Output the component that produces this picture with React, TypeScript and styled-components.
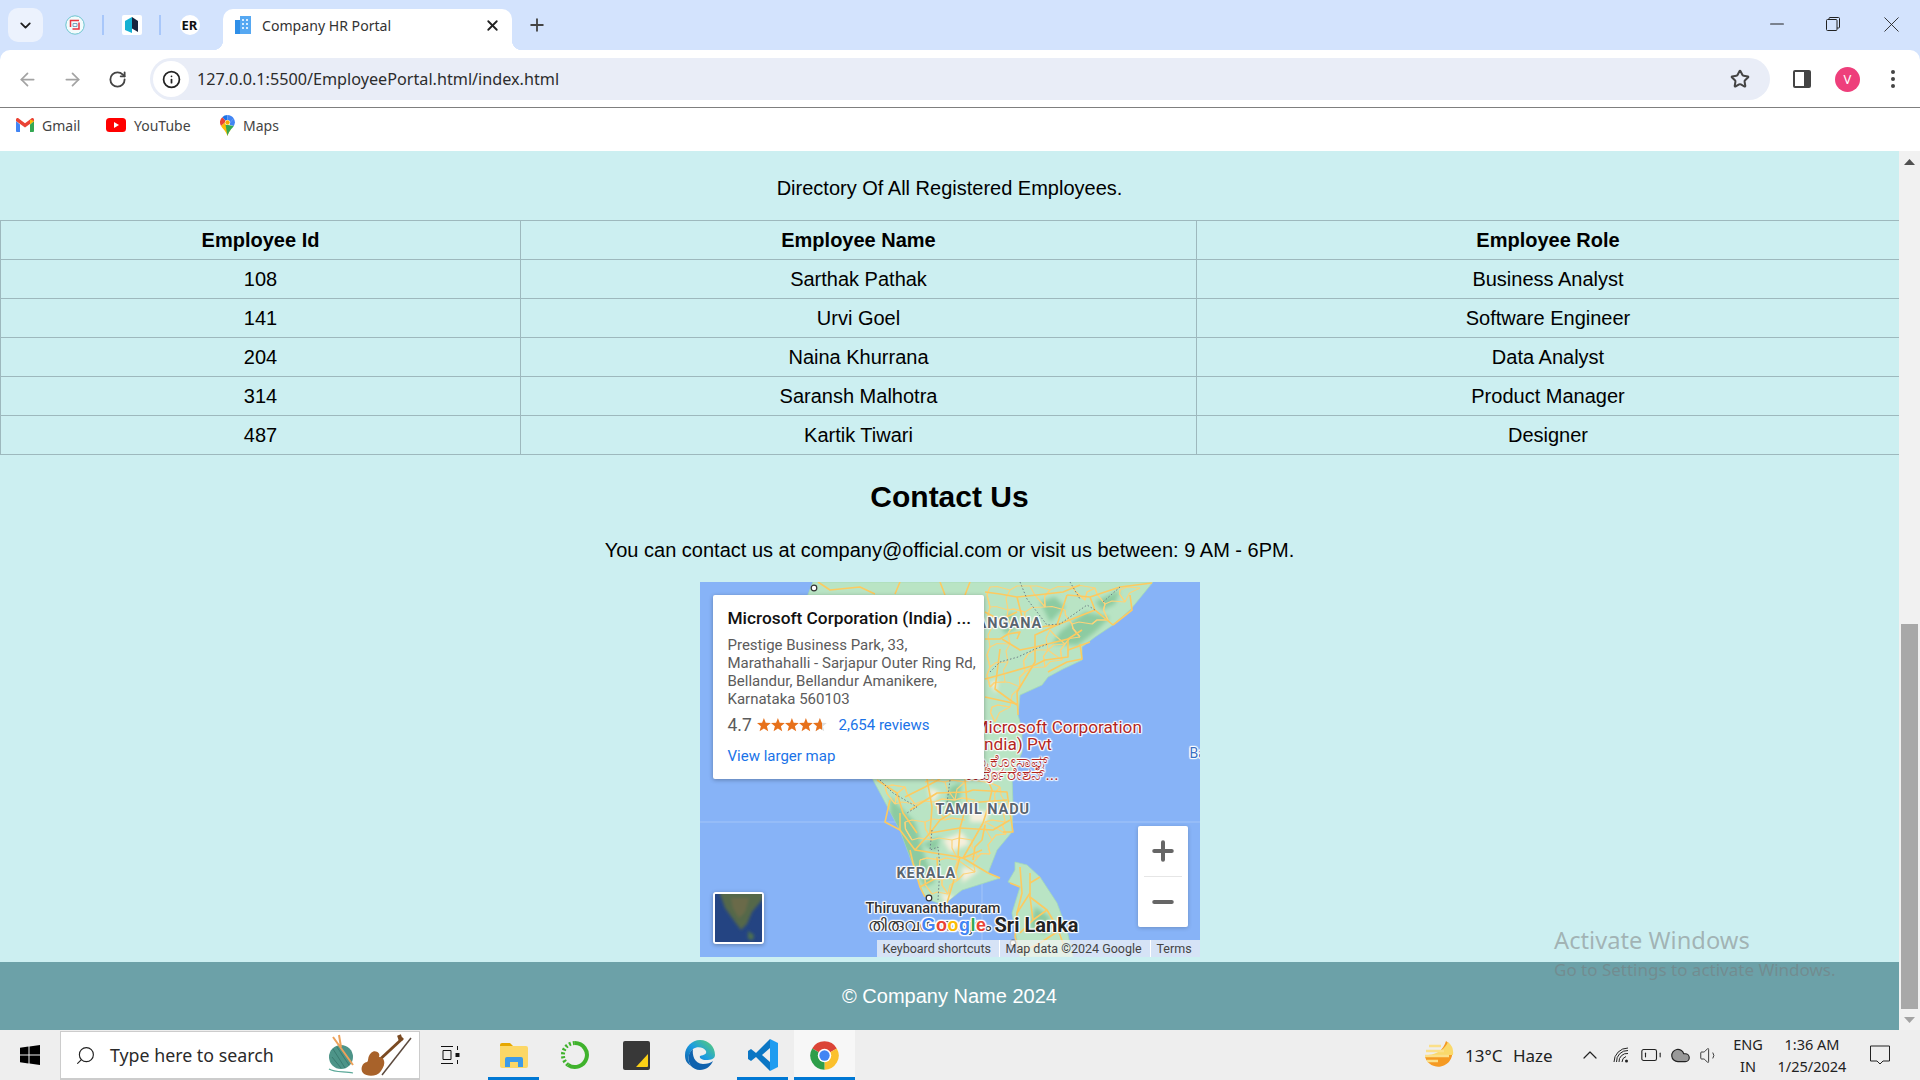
import React from "react";
import styled, { createGlobalStyle } from "styled-components";
import { ArrowLeft, ArrowRight, RotateCw, Info, Star, X, Plus, Minus, ChevronDown, ChevronUp, Search, BatteryLow, Volume1, Cloud } from "lucide-react";

const Global = createGlobalStyle`
  html, body { margin: 0; padding: 0; width: 1920px; height: 1080px; overflow: hidden; background: #fff; }
  * { box-sizing: border-box; }
`;

const UI = `"Noto Sans", "Open Sans", sans-serif`;
const halo = (c = "#fff") => `text-shadow: -1px 0 1px ${c}, 1px 0 1px ${c}, 0 -1px 1px ${c}, 0 1px 1px ${c}, -1px -1px 1px ${c}, 1px 1px 1px ${c}, 1px -1px 1px ${c}, -1px 1px 1px ${c};`;

const Screen = styled.div`
  width: 1920px; height: 1080px; display: flex; flex-direction: column; overflow: hidden; position: relative;
  font-family: "Liberation Sans", Arial, sans-serif;
`;

/* ---- browser chrome ---- */
const TabStrip = styled.div`
  height: 50px; flex: none; background: #d3e3fd; display: flex; align-items: center; padding-left: 8px; color: #1f1f1f;
`;
const TabListButton = styled.div`
  width: 35px; height: 34px; border-radius: 10px; background: #ecf2fd; display: flex; align-items: center; justify-content: center; margin-right: 4px;
`;
const PinnedTab = styled.div`
  width: 57px; height: 20px; display: flex; align-items: center; justify-content: center;
  ${(p: { $sep?: boolean }) => p.$sep ? "border-right: 2px solid #a8c7fa;" : ""}
`;
const ErBadge = styled.div`
  width: 20px; height: 20px; border-radius: 50%; background: #fff; color: #111; font: 700 13px ${UI}; display: flex; align-items: center; justify-content: center;
`;
const ActiveTab = styled.div`
  align-self: flex-end; margin-left: 5px; width: 289px; height: 41px; background: #fff; border-radius: 10px 10px 0 0; display: flex; align-items: center; padding: 0 11px 9px 12px; position: relative;
  &::before, &::after { content: ""; position: absolute; bottom: 0; width: 10px; height: 10px; }
  &::before { left: -10px; background: radial-gradient(circle at 0 0, #d3e3fd 10px, #fff 10.5px); }
  &::after { right: -10px; background: radial-gradient(circle at 100% 0, #d3e3fd 10px, #fff 10.5px); }
`;
const TabTitle = styled.span`
  font: 400 14.1px ${UI}; color: #333; margin-left: 11px; flex: 1; white-space: nowrap;
`;
const NewTab = styled.div`
  width: 30px; height: 30px; margin-left: 10px; display: flex; align-items: center; justify-content: center; color: #444;
`;
const WindowControls = styled.div`
  margin-left: auto; display: flex; align-items: center; height: 100%; padding-bottom: 2px;
`;
const WindowButton = styled.div<{ $w: number }>`
  width: ${p => p.$w}px; display: flex; align-items: center; justify-content: center; color: #222;
`;
const Toolbar = styled.div`
  height: 58px; flex: none; background: #fff; border-radius: 10px 10px 0 0; border-bottom: 1px solid #7f7f7f; display: flex; align-items: center; padding: 1px 0 0 0;
`;
const ToolbarBack = styled.div` background: #d3e3fd; height: 58px; flex: none; `;
const NavButton = styled.div`
  width: 45px; display: flex; align-items: center; justify-content: center; color: ${(p: { $dim?: boolean }) => p.$dim ? "#a3a3a3" : "#444"};
`;
const NavGroup = styled.div` display: flex; padding-left: 5px; margin-right: 10px; `;
const Omnibox = styled.div`
  width: 1620px; height: 42px; border-radius: 21px; background: #e9edf7; display: flex; align-items: center; padding: 0 20px 0 3px; flex: none;
`;
const SiteInfo = styled.div`
  width: 36px; height: 36px; border-radius: 50%; background: #fff; display: flex; align-items: center; justify-content: center; color: #222; flex: none;
`;
const UrlText = styled.span`
  font: 400 16.2px ${UI}; color: #2c2c2c; margin-left: 8px; flex: 1; white-space: nowrap;
`;
const ToolbarIcons = styled.div` display: flex; align-items: center; flex: none; padding-left: 23px; `;
const Avatar = styled.div`
  width: 25px; height: 25px; border-radius: 50%; background: #ee3f7b; color: #fff; font: 400 13px ${UI}; display: flex; align-items: center; justify-content: center; margin: 0 30px 0 24px;
`;
const Bookmarks = styled.div`
  height: 43px; flex: none; background: #fff; display: flex; align-items: center; padding: 0 0 9px 16px;
`;
const Bookmark = styled.div`
  display: flex; align-items: center; gap: 8px; font: 400 14px ${UI}; color: #444; width: ${(p: { $w: number }) => p.$w}px;
`;

/* ---- page ---- */
const Viewport = styled.div` flex: 1; display: flex; min-height: 0; `;
const Page = styled.main`
  width: 1899px; height: 879px; flex: none; background: #cceff1; padding-top: 26px; display: flex; flex-direction: column; color: #000;
`;
const Intro = styled.p` margin: 0 0 19px; height: 24px; text-align: center; font-size: 20px; line-height: 23px; `;
const Table = styled.table`
  width: 1899px; border-collapse: collapse; table-layout: fixed; font-size: 20px; flex: none;
  th, td { border: 1px solid #9db8bd; height: 39px; padding: 0; text-align: center; line-height: 23px; }
`;
const Heading = styled.h2` margin: 23px 0 0; height: 37px; line-height: 37px; text-align: center; font-size: 30px; font-weight: 700; `;
const ContactText = styled.p` margin: 24px 0 0; height: 23px; line-height: 23px; text-align: center; font-size: 20px; `;
const MapFrame = styled.div`
  width: 500px; height: 375px; margin: 20px auto 0; flex: none; position: relative; overflow: hidden; background: #87b3f7; font-family: Roboto, sans-serif;
`;
const MapArt = styled.svg` position: absolute; left: 0; top: 0; `;
const MapLabel = styled.span<{ $x: number; $y: number; $size: number; $color: string; $weight?: number; $ls?: number }>`
  position: absolute; left: ${p => p.$x}px; top: ${p => p.$y}px; line-height: 1; white-space: nowrap; transform: translateY(-50%);
  font-size: ${p => p.$size}px; color: ${p => p.$color}; font-weight: ${p => p.$weight ?? 400}; letter-spacing: ${p => p.$ls ?? 0}px;
  ${halo("rgba(255,255,255,.85)")}
`;
const GoogleMark = styled.span`
  position: absolute; left: 222px; top: 343px; transform: translateY(-50%); font: 700 18px "Liberation Sans", sans-serif; line-height: 1; letter-spacing: .5px; ${halo()}
`;
const Letter = styled.span<{ $c: string }>` color: ${p => p.$c}; `;
const InfoCard = styled.div`
  position: absolute; left: 13px; top: 13px; width: 271px; height: 184px; background: #fff; border-radius: 2px; box-shadow: 0 1px 4px rgba(0,0,0,.3); padding: 13px 0 0 15px;
`;
const CardTitle = styled.div` font-size: 17.3px; font-weight: 500; color: #111; line-height: 21px; white-space: nowrap; `;
const CardAddress = styled.div` margin-top: 7px; font-size: 15px; line-height: 18px; color: #5b5b5b; white-space: nowrap; `;
const RatingRow = styled.div` display: flex; align-items: center; margin-top: 6px; height: 22px; `;
const RatingValue = styled.span` font-size: 17.5px; color: #5b5b5b; width: 29px; `;
const CardLink = styled.span` font-size: 15px; color: #1a73e8; white-space: nowrap; `;
const Reviews = styled(CardLink)` margin-left: 12px; `;
const LargerMap = styled.div` margin-top: 11px; line-height: 18px; font-size: 15px; color: #1a73e8; `;
const ZoomControl = styled.div`
  position: absolute; left: 438px; top: 244px; width: 50px; height: 101px; background: #fff; border-radius: 2px; box-shadow: 0 1px 4px rgba(0,0,0,.2); display: flex; flex-direction: column; color: #666;
`;
const ZoomButton = styled.div` flex: 1; display: flex; align-items: center; justify-content: center; `;
const ZoomRule = styled.div` height: 1px; margin: 0 6px; background: #e6e6e6; flex: none; `;
const SatThumb = styled.div`
  position: absolute; left: 13px; top: 310px; width: 51px; height: 52px; border: 2px solid #fff; border-radius: 3px; overflow: hidden; box-shadow: 0 1px 4px rgba(0,0,0,.3); background: #244482;
`;
const Attribution = styled.div`
  position: absolute; left: 177px; right: 0; bottom: 0; height: 17px; background: rgba(245,245,245,.72); display: flex; align-items: center; font-size: 12.5px; color: #444; white-space: nowrap;
`;
const AttrItem = styled.span<{ $w: number; $sep?: boolean }>`
  width: ${p => p.$w}px; padding-left: 6px; height: 100%; line-height: 17px; ${p => p.$sep ? "border-right: 1px solid #fff;" : ""}
`;
const Footer = styled.footer`
  margin-top: 5px; height: 68px; flex: none; background: #6ca1a8; color: #fff; font-size: 20px; display: flex; align-items: center; justify-content: center;
`;
const ScrollTrack = styled.div`
  width: 21px; flex: none; background: #f1f1f1; display: flex; flex-direction: column; align-items: center; justify-content: space-between;
`;
const ScrollEnd = styled.div` height: 21px; display: flex; align-items: center; justify-content: center; `;
const ScrollThumb = styled.div` width: 17px; height: 385px; background: #a8a8a8; margin-top: 452px; flex: none; `;
const Watermark = styled.div`
  position: absolute; left: 1554px; top: 925px; color: rgba(120,120,120,.5); font-family: "Noto Sans", sans-serif; pointer-events: none; white-space: nowrap;
`;
const WatermarkTitle = styled.div` font-size: 23.7px; line-height: 31px; `;
const WatermarkSub = styled.div` font-size: 17px; line-height: 24px; margin-top: 2px; `;

/* ---- taskbar ---- */
const Taskbar = styled.div`
  height: 50px; flex: none; background: #eee; display: flex; align-items: stretch; font-family: ${UI}; color: #222;
`;
const StartButton = styled.div` width: 60px; display: flex; align-items: center; justify-content: center; `;
const SearchBox = styled.div`
  width: 360px; background: #fff; border: 1px solid #ccc; border-bottom-width: 2px; margin-top: 1px; display: flex; align-items: center; padding: 0 6px 0 14px; color: #222;
`;
const SearchText = styled.span` font-size: 17.8px; margin-left: 14px; flex: 1; color: #2a2a2a; white-space: nowrap; `;
const TaskIcon = styled.div<{ $w: number; $on?: boolean; $active?: boolean }>`
  width: ${p => p.$w}px; display: flex; align-items: center; justify-content: center; flex: none;
  ${p => p.$on ? "border-bottom: 3px solid #0078d4; padding-top: 3px;" : ""}
  ${p => p.$active ? "background: #f7f7f7;" : ""}
`;
const Tray = styled.div` margin-left: auto; display: flex; align-items: center; `;
const Weather = styled.div` display: flex; align-items: center; font-size: 17px; width: 150px; white-space: nowrap; `;
const WeatherText = styled.span` margin-left: 11px; word-spacing: 6px; `;
const TrayIcon = styled.div<{ $w: number }>` width: ${p => p.$w}px; display: flex; align-items: center; justify-content: center; color: #222; `;
const Stacked = styled.div<{ $w: number }>`
  width: ${p => p.$w}px; text-align: center; font-size: 14.5px; line-height: 22px; white-space: nowrap;
`;
const Notify = styled.div` width: 68px; display: flex; align-items: center; justify-content: center; padding-right: 12px; `;

/* ---- map art ---- */
const roads = [
  "M285 10 300 12 317 15 337 13 363 10 380 3", "M390 15 420 5 452 1", "M367 13 357 43 335 53 335 80 317 110 318 133",
  "M413 43 395 28 357 43", "M430 13 432 28 413 43", "M382 48 368 57 368 75 345 78 335 83", "M390 60 368 68",
  "M380 62 382 77 367 80 348 90", "M335 83 300 93 285 97", "M302 57 320 68 335 65 368 57", "M300 67 295 107 317 123",
  "M285 115 317 122", "M317 57 320 50 308 52 300 57 285 57", "M317 15 322 35 340 45 357 43", "M285 30 300 38 317 30", "M395 28 390 15 367 13",
  "M118 0 130 8 160 5 175 12", "M200 0 195 12", "M240 0 245 13", "M270 0 265 13",
  "M177 198 197 211 203 231 217 251", "M227 197 232 225 230 251 260 246 293 248 310 238", "M265 197 267 221 260 246 258 275 263 276 282 268",
  "M283 241 263 276 288 291", "M260 275 215 268 200 248 200 231", "M260 275 253 301 247 321", "M237 275 238 295 220 305 225 315",
  "M273 208 307 210 310 231 313 250 303 250", "M230 251 240 238 267 221 307 218", "M273 278 275 265 282 258 285 243", "M210 228 237 211 267 210 273 208",
  "M210 268 213 281 220 305", "M287 196 292 208 288 225 283 241", "M205 215 225 205 240 197", "M215 268 230 251", "M200 248 185 240 190 218",
  "M288 291 300 296", "M310 301 320 305", "M320 285 322 311 317 331 315 355 320 371", "M330 291 330 315 347 328 357 345 363 361",
  "M330 301 340 295", "M330 311 317 331", "M330 315 333 338 320 351", "M347 328 333 338", "M360 348 340 361 320 371",
];
const nodes: [number, number][] = [
  [290,5],[310,8],[330,4],[350,8],[372,5],[395,6],[420,8],[440,6],[290,25],[308,28],[325,30],[345,25],[365,28],[385,18],[405,22],[425,20],
  [292,45],[312,45],[330,42],[350,48],[372,42],[392,42],[408,38],[290,65],[310,62],[328,72],[348,68],[365,62],[380,55],[290,85],[308,80],[325,90],[345,85],[362,78],
  [290,105],[305,100],[320,105],[292,125],[310,125],[295,140],
  [185,205],[205,205],[225,200],[245,200],[265,200],[285,200],[300,205],[195,222],[215,222],[235,220],[255,218],[275,218],[295,222],[308,225],
  [205,240],[225,240],[245,238],[265,238],[285,240],[305,240],[212,258],[232,258],[252,258],[272,258],[292,258],[306,252],
  [220,278],[240,278],[258,278],[278,275],[290,272],[225,298],[242,298],[258,298],[275,290],[232,312],[248,312],
];
const meshRoads = nodes.flatMap(([x, y], i) =>
  nodes
    .map(([a, b], j) => ({ a, b, j, d: (a - x) ** 2 + (b - y) ** 2 }))
    .filter(n => n.j !== i && n.d < 700)
    .sort((m, n) => m.d - n.d)
    .slice(0, (i % 3) + 1)
    .map(n => `M${x} ${y} ${(x + n.a) / 2 + ((i * 7) % 7) - 3} ${(y + n.b) / 2 + ((i * 5) % 5) - 2} ${n.a} ${n.b}`)
);
const stateLines = [
  "M320 0 327 17 347 43 360 42 387 23 395 28", "M420 5 403 20", "M290 90 300 80 318 75 335 67 348 62", "M370 0 380 17",
  "M180 198 193 211 217 225 207 231", "M232 248 230 268 238 265 240 285 238 318", "M250 198 247 221",
];
const star = "M6.900 0 8.700 4.700 13.800 5.100 9.900 8.300 11.200 13.200 6.900 10.500 2.600 13.200 3.900 8.300 0 5.100 5.100 4.700Z";

function MapArtwork() {
  return (
    <MapArt width="500" height="375" viewBox="0 0 500 375">
      <defs>
        <filter id="soft" x="-20%" y="-20%" width="140%" height="140%"><feGaussianBlur stdDeviation="2" /></filter>
        <clipPath id="landClip"><path d="M113 0 453 0 431 27 413 43 395 55 382 65 382 78 363 87 348 95 342 103 320 113 318 133 322 147 322 170 312 195 313 223 312 250 297 268 288 291 300 296 262 308 243 323 230 318 223 311 210 275 200 248 172 196 130 100 105 20Z M308 300 315 288 315 280 327 283 340 295 357 321 367 348 373 375 320 375 312 331 320 305Z" /></clipPath>
      </defs>
      <rect width="500" height="375" fill="#87b3f7" />
      <path d="M0 240H500M282 240V375" stroke="#a3c5f8" strokeWidth="1" fill="none" />
      <path fill="#b9e4c4" stroke="#a6dab7" strokeWidth=".8" d="M113 0 453 0 431 27 413 43 395 55 382 65 382 78 363 87 348 95 342 103 320 113 318 133 322 147 322 170 312 195 313 223 312 250 297 268 288 291 300 296 262 308 243 323 230 318 223 311 210 275 200 248 172 196 130 100 105 20Z" />
      <path fill="#b9e4c4" stroke="#a6dab7" strokeWidth=".8" d="M308 300 315 288 315 280 327 283 340 295 357 321 367 348 373 375 320 375 312 331 320 305Z" />
      <g clipPath="url(#landClip)">
        <g filter="url(#soft)">
          <path fill="#8ccba1" d="M340 20 355 15 365 25 350 40ZM360 50 385 30 410 35 395 50 378 63 352 62ZM395 20 420 8 415 22 402 28ZM190 215 215 240 225 275 235 300 225 305 205 270 190 235ZM335 325 350 335 345 352 330 345ZM300 40 312 30 318 45 305 52ZM250 205 262 200 258 225 245 225ZM222 262 240 255 236 270Z" />
          <path fill="#f6efdc" d="M262 285 280 288 262 301ZM243 258 262 250 270 262 250 270ZM270 228 290 230 285 240 270 240ZM228 205 240 210 232 222ZM290 100 298 98 296 112ZM240 310 255 315 245 322Z" />
        </g>
      </g>
      <g fill="none" stroke="#fcd37a" strokeWidth="1.200" strokeLinejoin="round">
        {meshRoads.map((d, i) => <path key={i} d={d} />)}
      </g>
      <g fill="none" stroke="#fdca60" strokeWidth="1.600" strokeLinejoin="round">
        {roads.map((d, i) => <path key={i} d={d} />)}
      </g>
      <g fill="none" stroke="#6f7f86" strokeWidth="1" strokeDasharray="1.500 2">
        {stateLines.map((d, i) => <path key={i} d={d} />)}
      </g>
      <circle cx="114" cy="6" r="2.800" fill="#fff" stroke="#333" strokeWidth="1.200" />
      <circle cx="229" cy="316" r="2.800" fill="#fff" stroke="#333" strokeWidth="1.200" />
      <circle cx="313" cy="361" r="2.800" fill="#fff" stroke="#555" strokeWidth="1.200" />
    </MapArt>
  );
}

const rows: [number, string, string][] = [
  [108, "Sarthak Pathak", "Business Analyst"],
  [141, "Urvi Goel", "Software Engineer"],
  [204, "Naina Khurrana", "Data Analyst"],
  [314, "Saransh Malhotra", "Product Manager"],
  [487, "Kartik Tiwari", "Designer"],
];

const Dots = () => (
  <svg width="6" height="20" viewBox="0 0 6 20"><g fill="#444"><circle cx="3" cy="3" r="2" /><circle cx="3" cy="10" r="2" /><circle cx="3" cy="17" r="2" /></g></svg>
);

const sector = (a: number, b: number) => {
  const p = (d: number) => [12 + 11 * Math.cos(d * Math.PI / 180), 12 + 11 * Math.sin(d * Math.PI / 180)].map(n => n.toFixed(2)).join(" ");
  return `M12 12L${p(a)}A11 11 0 0 1 ${p(b)}Z`;
};

export default function App() {
  return (
    <Screen>
      <Global />
      <TabStrip>
        <TabListButton><ChevronDown size={17} strokeWidth={2.6} color="#1f1f1f" /></TabListButton>
        <PinnedTab $sep>
          <svg width="20" height="20" viewBox="0 0 20 20"><circle cx="10" cy="10" r="9.200" fill="#f2fbfc" stroke="#6cc4ce" strokeWidth="1" /><path d="M5.500 12V5.500H14M14 7.500V14H7.500" fill="none" stroke="#e8343f" strokeWidth="1.500" /><path d="M8 8.500h4v3H8z" fill="none" stroke="#5b8fb0" strokeWidth=".8" /></svg>
        </PinnedTab>
        <PinnedTab $sep>
          <svg width="20" height="20" viewBox="0 0 20 20"><rect width="20" height="20" rx="2" fill="#fff" /><path d="M3 6 10 2V18L3 15Z" fill="#15b1d3" /><path d="M10 2 16 6V17L10 13.500Z" fill="#16233d" /></svg>
        </PinnedTab>
        <PinnedTab><ErBadge>ER</ErBadge></PinnedTab>
        <ActiveTab>
          <svg width="16" height="18" viewBox="0 0 16 18"><rect x="0" y="4" width="5" height="14" fill="#2f8fe8" /><rect x="5" y="0" width="11" height="18" fill="#56a8f2" /><g fill="#d7ecff"><rect x="7" y="3" width="2" height="2" /><rect x="11" y="3" width="2" height="2" /><rect x="7" y="7" width="2" height="2" /><rect x="11" y="7" width="2" height="2" /><rect x="7" y="11" width="2" height="2" /><rect x="11" y="11" width="2" height="2" /></g></svg>
          <TabTitle>Company HR Portal</TabTitle>
          <X size={17} strokeWidth={2.6} color="#222" />
        </ActiveTab>
        <NewTab><Plus size={20} strokeWidth={2.2} /></NewTab>
        <WindowControls>
          <WindowButton $w={55}><Minus size={22} strokeWidth={1.1} /></WindowButton>
          <WindowButton $w={58}>
            <svg width="14" height="14" viewBox="0 0 14 14" fill="none" stroke="#222"><rect x=".5" y="2.500" width="10.500" height="11" rx="1" /><path d="M3 2.500V1.500A1 1 0 0 1 4 .5H12.500A1 1 0 0 1 13.500 1.500V10A1 1 0 0 1 12.500 11H11" /></svg>
          </WindowButton>
          <WindowButton $w={58}><X size={27} strokeWidth={.8} /></WindowButton>
        </WindowControls>
      </TabStrip>
      <ToolbarBack>
        <Toolbar>
          <NavGroup>
            <NavButton $dim><ArrowLeft size={21} strokeWidth={2} /></NavButton>
            <NavButton $dim><ArrowRight size={21} strokeWidth={2} /></NavButton>
            <NavButton><RotateCw size={19} strokeWidth={2.3} /></NavButton>
          </NavGroup>
          <Omnibox>
            <SiteInfo><Info size={19} strokeWidth={2.2} /></SiteInfo>
            <UrlText>127.0.0.1:5500/EmployeePortal.html/index.html</UrlText>
            <Star size={20} strokeWidth={2.4} color="#444" />
          </Omnibox>
          <ToolbarIcons>
            <svg width="18" height="18" viewBox="0 0 18 18"><rect width="18" height="18" rx="2" fill="#444" /><rect x="2" y="2" width="9" height="14" fill="#fff" /></svg>
            <Avatar>V</Avatar>
            <Dots />
          </ToolbarIcons>
        </Toolbar>
      </ToolbarBack>
      <Bookmarks>
        <Bookmark $w={90}>
          <svg width="18" height="14" viewBox="0 0 18 14"><path d="M0 3V12.500A1.200 1.200 0 0 0 1.200 14H4V6.500Z" fill="#4285f4" /><path d="M14 6.500V14H16.800A1.200 1.200 0 0 0 18 12.500V3Z" fill="#34a853" /><path d="M0 3 9 9.500 18 3 V1.600C18 .3 16.600-.4 15.600.3L14 1.500 9 5.200 4 1.500 2.400.3C1.400-.4 0 .3 0 1.600Z" fill="#ea4335" /><path d="M14 1.500 18 3 14 6.500Z" fill="#fbbc04" /></svg>
          Gmail
        </Bookmark>
        <Bookmark $w={114}>
          <svg width="20" height="14" viewBox="0 0 20 14"><rect width="20" height="14" rx="3.500" fill="#f00" /><path d="M8 4v6l5-3z" fill="#fff" /></svg>
          YouTube
        </Bookmark>
        <Bookmark $w={90}>
          <svg width="15" height="21" viewBox="0 0 15 21"><path d="M7.500 0A7.400 7.400 0 0 0 2.200 2.200L5.600 5.700 7.500 5 Z" fill="#1a73e8" /><path d="M7.500 0C10 0 12.500 1.400 13.800 3.600L10 7.500 7.500 5Z" fill="#4285f4" /><path d="M2.200 2.200A7.300 7.300 0 0 0 1.100 11L5.500 7 5.600 5.700Z" fill="#ea4335" /><path d="M13.800 3.600C15.300 6.300 15.200 8.500 13.800 11L9.500 9.800 10 7.500Z" fill="#4285f4" /><path d="M1.100 11C2.500 13.500 6 16 7.500 21 8.200 18.500 9 17 10.500 15L5.500 7Z" fill="#fbbc04" /><path d="M5.500 9.500 13.800 11C12.500 13 11.500 13.700 10.500 15 9.500 16.300 8.300 18 7.500 21Z" fill="#34a853" /><circle cx="7.500" cy="7.500" r="2.600" fill="#fff" /><circle cx="7.500" cy="7.500" r="2.200" fill="#f9ab00" /></svg>
          Maps
        </Bookmark>
      </Bookmarks>

      <Viewport>
        <Page>
          <Intro>Directory Of All Registered Employees.</Intro>
          <Table>
            <colgroup><col width="520" /><col width="676" /><col width="703" /></colgroup>
            <thead><tr><th>Employee Id</th><th>Employee Name</th><th>Employee Role</th></tr></thead>
            <tbody>
              {rows.map(([id, name, role]) => <tr key={id}><td>{id}</td><td>{name}</td><td>{role}</td></tr>)}
            </tbody>
          </Table>
          <Heading>Contact Us</Heading>
          <ContactText>You can contact us at company@official.com or visit us between: 9 AM - 6PM.</ContactText>
          <MapFrame>
            <MapArtwork />
            <MapLabel $x={249} $y={42} $size={14.5} $color="#5a6570" $weight={700} $ls={1}>TELANGANA</MapLabel>
            <MapLabel $x={236} $y={228} $size={14.5} $color="#5a6570" $weight={700} $ls={.9}>TAMIL NADU</MapLabel>
            <MapLabel $x={197} $y={292} $size={14.5} $color="#5a6570" $weight={700} $ls={.9}>KERALA</MapLabel>
            <MapLabel $x={274} $y={146} $size={17.2} $color="#b3261e">Microsoft Corporation</MapLabel>
            <MapLabel $x={274} $y={163} $size={17.2} $color="#b3261e">(India) Pvt</MapLabel>
            <MapLabel $x={270} $y={180} $size={16.5} $color="#b3261e">ಮೈಕ್ರೋಸಾಫ್ಟ್</MapLabel>
            <MapLabel $x={265} $y={193} $size={16.5} $color="#b3261e">ಕಾರ್ಪೊರೇಶನ್...</MapLabel>
            <MapLabel $x={166} $y={327} $size={14.5} $color="#333" $weight={500}>Thiruvananthapuram</MapLabel>
            <MapLabel $x={168} $y={343} $size={17} $color="#333" $weight={500}>തിരുവനന്തപുരം</MapLabel>
            <MapLabel $x={295} $y={343} $size={20} $color="#222" $weight={700}>Sri Lanka</MapLabel>
            <MapLabel $x={490} $y={171} $size={14} $color="#3a6fc4">Bay</MapLabel>
            <GoogleMark>
              <Letter $c="#4285f4">G</Letter><Letter $c="#ea4335">o</Letter><Letter $c="#fbbc05">o</Letter><Letter $c="#4285f4">g</Letter><Letter $c="#34a853">l</Letter><Letter $c="#ea4335">e</Letter>
            </GoogleMark>
            <InfoCard>
              <CardTitle>Microsoft Corporation (India) ...</CardTitle>
              <CardAddress>Prestige Business Park, 33,<br />Marathahalli - Sarjapur Outer Ring Rd,<br />Bellandur, Bellandur Amanikere,<br />Karnataka 560103</CardAddress>
              <RatingRow>
                <RatingValue>4.7</RatingValue>
                <svg width="70" height="14" viewBox="0 0 70 14">
                  <defs><clipPath id="partial"><rect x="56" y="0" width="9" height="14" /></clipPath></defs>
                  {[0, 1, 2, 3].map(i => <path key={i} d={star} fill="#e7711b" transform={`translate(${i * 14} 0)`} />)}
                  <path d={star} fill="#ddd" transform="translate(56 0)" />
                  <g clipPath="url(#partial)"><path d={star} fill="#e7711b" transform="translate(56 0)" /></g>
                </svg>
                <Reviews>2,654 reviews</Reviews>
              </RatingRow>
              <LargerMap>View larger map</LargerMap>
            </InfoCard>
            <ZoomControl>
              <ZoomButton><Plus size={30} strokeWidth={3.2} /></ZoomButton>
              <ZoomRule />
              <ZoomButton><Minus size={30} strokeWidth={3.2} /></ZoomButton>
            </ZoomControl>
            <SatThumb>
              <svg width="47" height="48" viewBox="0 0 47 48">
                <defs><filter id="satBlur"><feGaussianBlur stdDeviation="1.500" /></filter></defs>
                <rect width="47" height="48" fill="#244482" />
                <g filter="url(#satBlur)">
                  <path d="M4 -3 50 -3 47 6 37 18 32 30 26 36 20 28 10 14Z" fill="#55684a" />
                  <path d="M16 4 34 4 30 18 24 24 18 14Z" fill="#6b6b4a" />
                  <path d="M33 37 39 41 38 46 33 45Z" fill="#4d7050" />
                </g>
              </svg>
            </SatThumb>
            <Attribution>
              <AttrItem $w={123} $sep>Keyboard shortcuts</AttrItem>
              <AttrItem $w={151} $sep>Map data ©2024 Google</AttrItem>
              <AttrItem $w={49}>Terms</AttrItem>
            </Attribution>
          </MapFrame>
          <Footer>© Company Name 2024</Footer>
        </Page>
        <ScrollTrack>
          <ScrollEnd><svg width="11" height="6" viewBox="0 0 11 6"><path d="M5.500 0 11 6H0Z" fill="#505050" /></svg></ScrollEnd>
          <ScrollThumb />
          <ScrollEnd><svg width="11" height="6" viewBox="0 0 11 6"><path d="M5.500 6 11 0H0Z" fill="#a3a3a3" /></svg></ScrollEnd>
        </ScrollTrack>
      </Viewport>

      <Taskbar>
        <StartButton>
          <svg width="20" height="20" viewBox="0 0 20 20" fill="#000"><path d="M0 2.800 8.500 1.600V9.500H0ZM9.500 1.500 20 0V9.500H9.500ZM0 10.500H8.500V18.400L0 17.200ZM9.500 10.500H20V20L9.500 18.500Z" /></svg>
        </StartButton>
        <SearchBox>
          <Search size={21} strokeWidth={1.3} style={{ transform: "scaleX(-1)" }} />
          <SearchText>Type here to search</SearchText>
          <svg width="86" height="44" viewBox="0 0 86 44">
            <path d="M2 36C8 40 18 38 26 40" stroke="#5aa898" fill="none" strokeWidth="1.200" />
            <circle cx="14" cy="24" r="12" fill="#4d9488" />
            <path d="M6 16 18 35M10 14 22 32M5 24 14 35" stroke="#3a7a70" strokeWidth="1" fill="none" />
            <path d="M6 4 26 32M12 2 14 14" stroke="#eda15a" strokeWidth="2" fill="none" />
            <path d="M76 5 48 31" stroke="#7a4a22" strokeWidth="3" fill="none" />
            <path d="M44 20C48 16 54 20 52 24 57 24 60 30 54 38 50 44 40 44 36 40 33 36 35 30 40 29 42 28 40 24 44 20Z" fill="#a8622a" />
            <path d="M72 2 74 8" stroke="#7a4a22" strokeWidth="4" />
            <path d="M84 5 55 42" stroke="#5c4a3e" strokeWidth="1.500" fill="none" />
          </svg>
        </SearchBox>
        <TaskIcon $w={59}>
          <svg width="20" height="20" viewBox="0 0 20 20" fill="none" stroke="#111"><path d="M1 1.500H13M1 18.500H13M3 5.500H11V14.500H3Z" /><path d="M17.500 1V5M17.500 15V19" /><rect x="16" y="8.500" width="3" height="3" fill="#111" /></svg>
        </TaskIcon>
        <TaskIcon $w={9} />
        <TaskIcon $w={51} $on>
          <svg width="28" height="26" viewBox="0 0 28 26"><path d="M0 3A2 2 0 0 1 2 1H10L13 4H0Z" fill="#e6a700" /><path d="M0 4H26A2 2 0 0 1 28 6V24A2 2 0 0 1 26 26H2A2 2 0 0 1 0 24Z" fill="#fcd766" /><path d="M5 25V17A2 2 0 0 1 7 15H21A2 2 0 0 1 23 17V25H18V20H10V25Z" fill="#3d9be9" /></svg>
        </TaskIcon>
        <TaskIcon $w={72}>
          <svg width="30" height="30" viewBox="0 0 30 30" fill="none"><path d="M15 3A12 12 0 1 1 8 24.800" stroke="#3fb22c" strokeWidth="4" /><path d="M8 24.800A12 12 0 0 1 15 3" stroke="#3fb22c" strokeWidth="4" strokeDasharray="2 2" /></svg>
        </TaskIcon>
        <TaskIcon $w={51}>
          <svg width="27" height="29" viewBox="0 0 27 29"><rect width="27" height="29" rx="2" fill="#383838" /><path d="M13 26 25 13V25A1 1 0 0 1 24 26Z" fill="#fcd116" /></svg>
        </TaskIcon>
        <TaskIcon $w={75}>
          <svg width="30" height="30" viewBox="0 0 30 30"><defs><linearGradient id="edge" x1="0" y1="1" x2="1" y2="0"><stop offset="0" stopColor="#0c59a4" /><stop offset=".5" stopColor="#1b9de2" /><stop offset="1" stopColor="#5fd36b" /></linearGradient></defs><path d="M15 0C24 0 30 7 30 15 30 19 26 20 21 20 17 20 14 18 15 16 19 15 22 14 21 11 19 7 12 6 8 9 3 13 2 21 6 26 1 23 0 19 0 15 0 7 7 0 15 0Z" fill="url(#edge)" /><path d="M6 26C2 20 3 13 8 9 7 14 9 24 18 24 22 24 26 23 28 21 26 26 21 30 15 30 11 30 8 28 6 26Z" fill="#0f62ae" /></svg>
        </TaskIcon>
        <TaskIcon $w={51} $on>
          <svg width="30" height="32" viewBox="0 0 30 32"><path d="M22 0 30 4V28L22 32Z" fill="#1f9cf0" /><path d="M22 0V9L14 16 22 23V32L8 18 3 22 0 20V12L3 10 8 14Z" fill="#0b76c4" /></svg>
        </TaskIcon>
        <TaskIcon $w={6} />
        <TaskIcon $w={61} $on $active>
          <svg width="31" height="31" viewBox="0 0 24 24"><path d={sector(210, 330)} fill="#db4437" /><path d={sector(330, 90)} fill="#fbc02d" /><path d={sector(90, 210)} fill="#2e9e49" /><circle cx="12" cy="12" r="5.200" fill="#fff" /><circle cx="12" cy="12" r="4" fill="#4285f4" /></svg>
        </TaskIcon>
        <Tray>
          <Weather>
            <svg width="30" height="30" viewBox="0 0 30 30"><path d="M22 1A14 14 0 1 1 1 17 22 22 0 0 0 22 1Z" fill="#f59a23" /><path d="M24 2A14 14 0 0 1 29 15H4C14 14 21 9 24 2Z" fill="#fad96b" /><g stroke="#fbe08a" strokeWidth="2.500"><path d="M5 6H17M2 11H20M1 16H25M3 21H14" /></g></svg>
            <WeatherText>13°C Haze</WeatherText>
          </Weather>
          <TrayIcon $w={32}><ChevronUp size={24} strokeWidth={1.2} /></TrayIcon>
          <TrayIcon $w={30}>
            <svg width="16" height="16" viewBox="0 0 16 16" fill="none" stroke="#222"><path d="M1 15A14 14 0 0 1 15 1M3.500 15A11 11 0 0 1 15 3.500M6 15A8 8 0 0 1 15 6.500M9 15A6 6 0 0 1 13 9.500" /><circle cx="13.500" cy="14" r="1.500" fill="#222" stroke="none" /></svg>
          </TrayIcon>
          <TrayIcon $w={30}><BatteryLow size={22} strokeWidth={1.2} /></TrayIcon>
          <TrayIcon $w={28}><Cloud size={21} strokeWidth={1.3} fill="#999" /></TrayIcon>
          <TrayIcon $w={30}><Volume1 size={21} strokeWidth={1} /></TrayIcon>
          <Stacked $w={48}>ENG<br />IN</Stacked>
          <Stacked $w={80}>1:36 AM<br />1/25/2024</Stacked>
          <Notify>
            <svg width="20" height="20" viewBox="0 0 20 20" fill="none" stroke="#222"><path d="M.5 1H19.500V16H13L10 19 7 16H.5Z" /></svg>
          </Notify>
        </Tray>
      </Taskbar>
      <Watermark>
        <WatermarkTitle>Activate Windows</WatermarkTitle>
        <WatermarkSub>Go to Settings to activate Windows.</WatermarkSub>
      </Watermark>
    </Screen>
  );
}
